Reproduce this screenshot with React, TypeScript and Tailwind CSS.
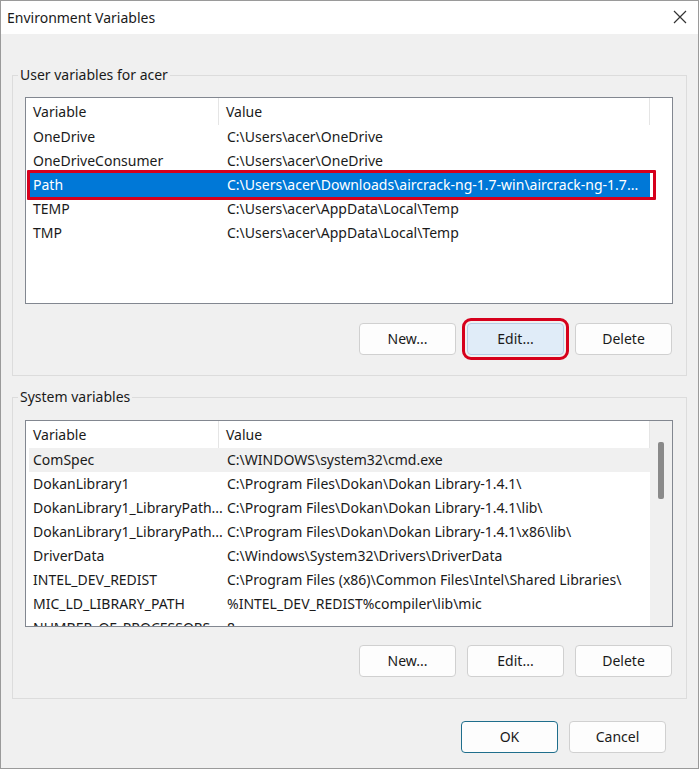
import React from "react";

const font = { fontFamily: '"Noto Sans", "Open Sans", Arial, sans-serif' };

type Row = { name: string; value: string; selected?: boolean; hover?: boolean };

const userRows: Row[] = [
  { name: "OneDrive", value: "C:\\Users\\acer\\OneDrive" },
  { name: "OneDriveConsumer", value: "C:\\Users\\acer\\OneDrive" },
  { name: "Path", value: "C:\\Users\\acer\\Downloads\\aircrack-ng-1.7-win\\aircrack-ng-1.7...", selected: true },
  { name: "TEMP", value: "C:\\Users\\acer\\AppData\\Local\\Temp" },
  { name: "TMP", value: "C:\\Users\\acer\\AppData\\Local\\Temp" },
];

const sysRows: Row[] = [
  { name: "ComSpec", value: "C:\\WINDOWS\\system32\\cmd.exe", hover: true },
  { name: "DokanLibrary1", value: "C:\\Program Files\\Dokan\\Dokan Library-1.4.1\\" },
  { name: "DokanLibrary1_LibraryPath...", value: "C:\\Program Files\\Dokan\\Dokan Library-1.4.1\\lib\\" },
  { name: "DokanLibrary1_LibraryPath...", value: "C:\\Program Files\\Dokan\\Dokan Library-1.4.1\\x86\\lib\\" },
  { name: "DriverData", value: "C:\\Windows\\System32\\Drivers\\DriverData" },
  { name: "INTEL_DEV_REDIST", value: "C:\\Program Files (x86)\\Common Files\\Intel\\Shared Libraries\\" },
  { name: "MIC_LD_LIBRARY_PATH", value: "%INTEL_DEV_REDIST%compiler\\lib\\mic" },
  { name: "NUMBER_OF_PROCESSORS", value: "8" },
];

function ListRow({ r }: { r: Row }) {
  const bg = r.selected ? "bg-[#0078d7] text-white" : r.hover ? "bg-[#f0f0f0] text-[#1a1a1a]" : "text-[#1a1a1a]";
  return (
    <div className={`ml-[3px] w-[621px] h-[24px] shrink-0 flex items-center whitespace-nowrap leading-[20px] ${bg}`}>
      <div className="w-[198px] pl-[4px] overflow-hidden">{r.name}</div>
      <div className="flex-1 overflow-hidden">{r.value}</div>
    </div>
  );
}

function ListView({ rows, scroll, highlight }: { rows: Row[]; scroll?: boolean; highlight?: boolean }) {
  return (
    <div className="relative w-[648px] h-[207px] border border-[#828790] bg-white overflow-hidden flex">
      <div className="w-[624px] flex flex-col">
        <div className="h-[27px] shrink-0 flex text-[#1a1a1a] leading-[20px]">
          <div className="w-[193px] pl-[7px] flex items-center border-r border-[#e5e5e5]">Variable</div>
          <div className="w-[431px] pl-[7px] flex items-center border-r border-[#e5e5e5]">Value</div>
        </div>
        {rows.map((r, i) => (
          <ListRow key={i} r={r} />
        ))}
      </div>
      {scroll && (
        <div className="flex-1 bg-[#f0f0f0] flex justify-center pt-[21px]">
          <div className="w-[6px] h-[57px] bg-[#8a8a8a] rounded-[2px]" />
        </div>
      )}
      {highlight && (
        <div className="absolute left-[1px] top-[72px] w-[629px] h-[30px] border-[3px] border-[#d6001c] rounded-[1px] pointer-events-none" />
      )}
    </div>
  );
}

function Btn({ label, active, primary, red }: { label: string; active?: boolean; primary?: boolean; red?: boolean }) {
  const base = "w-[97px] h-[32px] rounded-[4px] flex items-center justify-center text-[#1a1a1a] leading-[20px]";
  const look = active
    ? "bg-[#e0ecf8] border border-[#b6cde6]"
    : primary
    ? "bg-[#fdfdfd] border border-[#1f6e8c]"
    : "bg-[#fdfdfd] border border-[#d0d0d0]";
  return (
    <div className={`${base} ${look} ${red ? "outline-[3px] outline-solid outline-[#d6001c] outline-offset-[2px]" : ""}`}>
      {label}
    </div>
  );
}

function Group({ title, children, pt, pb }: { title: string; children: React.ReactNode; pt: string; pb: string }) {
  return (
    <fieldset className={`w-[675px] border border-[#dcdcdc] ${pb}`}>
      <legend className="ml-[5px] px-[2px] text-[#1a1a1a]">{title}</legend>
      <div className={`pl-[12px] ${pt}`}>{children}</div>
    </fieldset>
  );
}

export default function App() {
  return (
    <div className="w-[699px] h-[769px] bg-[#f0f0f0] text-[14px] leading-none flex flex-col border border-[#9a9a9a]" style={font}>
      <div className="h-[33px] shrink-0 bg-white flex items-center justify-between pl-[6px] pr-[10px] text-[14px] text-[#1a1a1a] leading-[20px]">
        <span>Environment Variables</span>
        <svg width="16" height="16" viewBox="0 0 16 16" className="mt-[-2px]">
          <path d="M2 2 L14 14 M14 2 L2 14" stroke="#333" strokeWidth="1.2" fill="none" />
        </svg>
      </div>
      <div className="flex flex-col pl-[11px] pt-[34px]">
        <Group title="User variables for acer" pt="pt-[15px]" pb="pb-[20px]">
          <ListView rows={userRows} highlight />
          <div className="flex justify-end gap-[11px] pr-[14px] mt-[19px]">
            <Btn label="New..." />
            <Btn label="Edit..." active red />
            <Btn label="Delete" />
          </div>
        </Group>
        <div className="h-[14px] shrink-0" />
        <Group title="System variables" pt="pt-[16px]" pb="pb-[21px]">
          <ListView rows={sysRows} scroll />
          <div className="flex justify-end gap-[11px] pr-[14px] mt-[18px]">
            <Btn label="New..." />
            <Btn label="Edit..." />
            <Btn label="Delete" />
          </div>
        </Group>
        <div className="flex justify-end gap-[11px] pr-[32px] mt-[22px]">
          <Btn label="OK" primary />
          <Btn label="Cancel" />
        </div>
      </div>
    </div>
  );
}
